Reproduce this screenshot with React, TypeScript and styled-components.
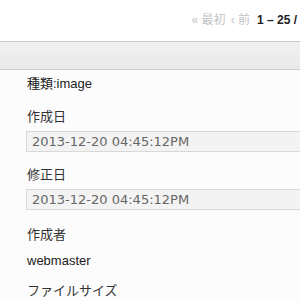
import React from 'react'
import styled, { createGlobalStyle } from 'styled-components'

const GlobalStyle = createGlobalStyle`
  html, body {
    margin: 0;
    padding: 0;
    background: #fff;
  }
  body {
    font-family: "Liberation Sans", "Noto Sans CJK JP", sans-serif;
    font-size: 13px;
    color: #333;
  }
`

const Page = styled.div`
  width: 300px;
  height: 300px;
  overflow: hidden;
  background: #fcfcfc;
`

const Header = styled.div`
  height: 41px;
  background: #fff;
  display: flex;
  align-items: center;
  justify-content: flex-end;
  padding-right: 3px;
  white-space: nowrap;
`

const Pager = styled.div`
  display: flex;
  align-items: center;
  gap: 5px;
  line-height: 18px;
  margin-top: -1px;
`

const PagerLink = styled.span`
  color: #c4c4c4;
  font-size: 12px;
`

const PagerRange = styled.span`
  color: #222;
  font-weight: bold;
  font-size: 12px;
  margin-left: 2px;
`

const Toolbar = styled.div`
  height: 27px;
  border-top: 1px solid #c6c6c6;
  border-bottom: 1px solid #d0d0d0;
  background: linear-gradient(#f1f1f1, #e9e9e9);
`

const Content = styled.div`
  padding: 4px 0 0 26px;
  display: flex;
  flex-direction: column;
`

const Field = styled.div<{ $gap?: number }>`
  display: flex;
  flex-direction: column;
  margin-bottom: ${p => (p.$gap ?? 13)}px;
`

const Label = styled.div`
  line-height: 20px;
  padding-left: 1px;
  color: #333;
`

const Value = styled.div<{ $tight?: boolean }>`
  line-height: 20px;
  padding-left: 1px;
  color: #222;
  margin-top: ${p => (p.$tight ? '6px' : '0')};
`

const DateBox = styled.div`
  margin-top: 4px;
  width: 300px;
  height: 19px;
  border: 1px solid #d9d9d9;
  background: #f3f3f3;
  color: #666;
  font-family: "DejaVu Sans", sans-serif;
  font-size: 13px;
  line-height: 19px;
  padding-left: 5px;
  box-sizing: content-box;
`

export default function App() {
  return (
    <Page>
      <GlobalStyle />
      <Header>
        <Pager>
          <PagerLink>« 最初</PagerLink>
          <PagerLink>‹ 前</PagerLink>
          <PagerRange>1 – 25 /</PagerRange>
        </Pager>
      </Header>
      <Toolbar />
      <Content>
        <Field>
          <Value>種類:image</Value>
        </Field>
        <Field>
          <Label>作成日</Label>
          <DateBox>2013-12-20 04:45:12PM</DateBox>
        </Field>
        <Field $gap={15}>
          <Label>修正日</Label>
          <DateBox>2013-12-20 04:45:12PM</DateBox>
        </Field>
        <Field $gap={10}>
          <Label>作成者</Label>
          <Value $tight>webmaster</Value>
        </Field>
        <Field>
          <Label>ファイルサイズ</Label>
        </Field>
      </Content>
    </Page>
  )
}
